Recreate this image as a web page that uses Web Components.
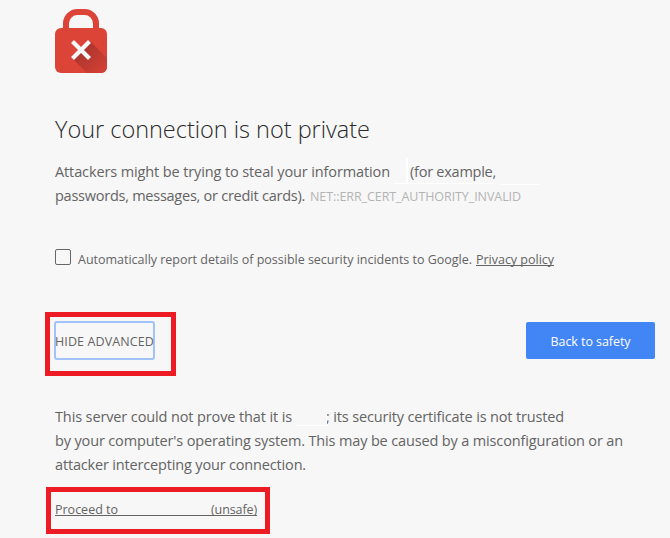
<!DOCTYPE html>
<html lang="en"><head><meta charset="utf-8"><title>Privacy error</title>
<style>html,body{margin:0;background:#f7f7f7;height:538px;overflow:hidden}</style></head><body>
<privacy-error></privacy-error>
<script>
// A run of text spaced to a given width.
class TextRun extends HTMLElement{
 connectedCallback(){
  const r=this.attachShadow({mode:'open'});
  r.innerHTML='<style>:host{display:block;flex:none;white-space:pre}span{display:inline-block}:host([underlined]) span{text-decoration:underline 1px;text-underline-offset:1px;text-decoration-skip-ink:none}</style><span></span>';
  const s=r.querySelector('span');s.textContent=this.getAttribute('text');
  const w=+this.getAttribute('w');this.style.width=w+'px';
  const n=s.getBoundingClientRect().width;
  s.style.letterSpacing=((w-n)/s.textContent.length)+'px';
 }
}
class LockIcon extends HTMLElement{
 connectedCallback(){
  this.attachShadow({mode:'open'}).innerHTML=`<style>:host{display:block;height:64px}svg{display:block}</style>
<svg width="52" height="64" viewBox="0 0 52 64"><defs><linearGradient id="g" x1="26" y1="40" x2="48" y2="62" gradientUnits="userSpaceOnUse"><stop offset="0" stop-color="#ab352c"/><stop offset="1" stop-color="#d24036"/></linearGradient><clipPath id="c"><rect y="19" width="52" height="45" rx="6"/></clipPath></defs>
<path d="M11 22V14.500A11.500 11.500 0 0 1 22.500 3H29.500A11.500 11.500 0 0 1 41 14.500V22" fill="none" stroke="#db4437" stroke-width="6"/>
<rect y="19" width="52" height="45" rx="6" fill="#db4437"/>
<path clip-path="url(#c)" d="M35 32L60 57V72H40L17 49Z" fill="url(#g)"/>
<path d="M17.500 32.500L34.500 49.500M34.500 32.500L17.500 49.500" stroke="#f7f7f7" stroke-width="4.200"/></svg>`;
 }
}
class MarkBox extends HTMLElement{
 connectedCallback(){
  this.attachShadow({mode:'open'}).innerHTML='<style>:host{display:flex;box-sizing:border-box;border:5px solid #ed1c24}</style><slot></slot>';
 }
}
class ActionButton extends HTMLElement{
 connectedCallback(){
  this.attachShadow({mode:'open'}).innerHTML=`<style>:host{display:flex;box-sizing:border-box;align-items:center;justify-content:center;border-radius:2px;font-size:12.500px;padding-top:2px}
:host([primary]){width:129px;height:37px;background:#4285f4;color:#fff}
:host([focused]){width:101px;height:39px;border:2px solid #a1c2fa;border-radius:3px}</style><slot></slot>`;
 }
}
class PrivacyError extends HTMLElement{
 connectedCallback(){
  this.attachShadow({mode:'open'}).innerHTML=`<style>
:host{display:block;box-sizing:border-box;width:670px;height:538px;padding:9px 15px 0 55px;color:#646464;font:370 14.500px/24px "Open Sans","Noto Sans",sans-serif}
h1{margin:40px 0 0;font:350 23.500px/32px "Open Sans","Noto Sans",sans-serif;color:#2b2b2b}
p{margin:0}.line{display:flex;height:24px;line-height:26px}
.intro{margin-top:14px}.small{font-size:12.500px}.code{font-size:12.500px;line-height:27px;color:#b4b4b4;margin-left:5px}
.blank{position:relative;flex:none}.blank i{position:absolute;background:#fff}
.report{display:flex;align-items:center;height:24px;margin-top:39px}
.report .small{padding-top:3px}
.box{box-sizing:border-box;width:16px;height:16px;border:1px solid #666;border-radius:2px;margin:0 7px 2px 0}
.actions{display:flex;justify-content:space-between;margin-top:42px;height:64px}
.adv{width:131px;height:64px;margin-left:-10px;padding:4px 0 0 4px}
.back{margin-top:10px}
.details{margin-top:28px}
.proceed{width:224px;height:47px;margin:11px 0 0 -9px;padding:9px 0 0 4px}
.go{display:flex;justify-content:space-between;width:202px;height:14px;line-height:17px;font-size:12.500px;border-bottom:1px solid #646464}
</style>
<lock-icon></lock-icon>
<h1><text-run w="315" text="Your connection is not private"></text-run></h1>
<p class="intro"><span class="line"><text-run w="335" text="Attackers might be trying to steal your information"></text-run><span class="blank" style="width:20px"><i style="left:4px;top:24px;width:103px;height:1px"></i><i style="left:16px;top:-1px;width:2px;height:26px"></i></span><text-run w="86" text="(for example,"></text-run><span class="blank"><i style="left:5px;top:25px;width:39px;height:1px"></i></span></span>
<span class="line"><text-run w="250" text="passwords, messages, or credit cards)."></text-run><text-run class="code" w="211" text="NET::ERR_CERT_AUTHORITY_INVALID"></text-run></span></p>
<div class="report"><span class="box"></span><text-run class="small" w="394" text="Automatically report details of possible security incidents to Google."></text-run><text-run class="small" underlined style="margin-left:4px" w="78" text="Privacy policy"></text-run></div>
<div class="actions"><mark-box class="adv"><action-button focused><text-run w="99" text="HIDE ADVANCED"></text-run></action-button></mark-box><action-button primary class="back"><text-run w="80" text="Back to safety"></text-run></action-button></div>
<p class="details"><span class="line"><text-run w="237" text="This server could not prove that it is"></text-run><span class="blank" style="width:34px"><i style="left:4px;top:21px;width:31px;height:1px"></i><i style="left:34px;top:4px;width:1px;height:18px"></i></span><text-run w="238" text="; its security certificate is not trusted"></text-run></span>
<span class="line"><text-run w="568" text="by your computer's operating system. This may be caused by a misconfiguration or an"></text-run></span>
<span class="line"><text-run w="251" text="attacker intercepting your connection."></text-run></span></p>
<mark-box class="proceed"><span class="go"><text-run w="63" text="Proceed to"></text-run><text-run w="46" text="(unsafe)"></text-run></span></mark-box>`;
 }
}
customElements.define('text-run',TextRun);customElements.define('lock-icon',LockIcon);
customElements.define('mark-box',MarkBox);customElements.define('action-button',ActionButton);
customElements.define('privacy-error',PrivacyError);
</script></body></html>
